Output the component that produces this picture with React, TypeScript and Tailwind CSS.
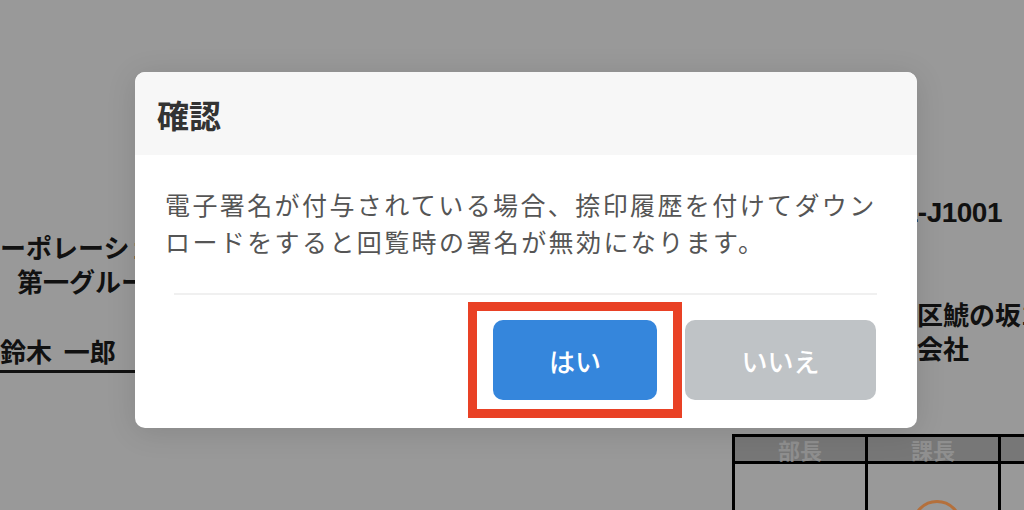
const jp = "font-['Noto_Sans_CJK_JP','Noto_Sans',sans-serif]";

function BackgroundDocument() {
  return (
    <div className={`flex h-full w-full justify-between text-[#111] ${jp}`}>
      <div className="w-[320px] pt-[230px] font-bold">
        <p className="whitespace-nowrap text-[26px] leading-[34px]">ーポレーション</p>
        <p className="whitespace-nowrap pl-[17px] text-[26px] leading-[34px]">第一グループ</p>
        <p className="mt-[36px] w-[300px] whitespace-nowrap border-b-[3px] border-[#111] pb-[2px] text-[26px] leading-[34px]">
          鈴木&nbsp;&nbsp;一郎
        </p>
      </div>
      <div className="w-[292px] pt-[195px]">
        <p className="whitespace-nowrap pr-[22px] text-right font-['Liberation_Sans',sans-serif] text-[28px] font-bold leading-[36px] tracking-[-0.5px]">
          No.2021-J1001
        </p>
        <div className="mt-[66px] pl-[185px] font-bold">
          <p className="whitespace-nowrap text-[26px] leading-[34px]">区鯱の坂1-2-3</p>
          <p className="whitespace-nowrap text-[26px] leading-[34px]">会社</p>
        </div>
        <div className="mt-[69px] flex border-l-[3px] border-t-[3px] border-[#000]">
          {["部長", "課長", "担当"].map((label) => (
            <div key={label} className="w-[133px] shrink-0 border-r-[3px] border-[#000]">
              <div className="flex h-[27px] items-center justify-center border-b-[3px] border-[#000] bg-[#777] text-[22px] font-bold text-[#8f8f8f]">
                {label}
              </div>
              <div className="relative h-[80px] overflow-hidden">
                {label === "課長" && (
                  <span className="absolute left-[44px] top-[36px] h-[50px] w-[50px] rounded-full border-[3px] border-[#b4703c]" />
                )}
              </div>
            </div>
          ))}
        </div>
      </div>
    </div>
  );
}

export default function App() {
  return (
    <div className="relative h-[510px] w-full overflow-hidden bg-[#999999]">
      <BackgroundDocument />

      <div
        className={`absolute left-[135px] top-[72px] w-[782px] overflow-hidden rounded-[10px] bg-white shadow-[0_4px_30px_rgba(0,0,0,0.12)] ${jp}`}
      >
        <div className="flex h-[83px] items-center bg-[#f7f7f7] pl-[22px]">
          <h2 className="text-[32px] font-bold leading-none text-[#333]">確認</h2>
        </div>

        <div className="px-[30px] pb-[33px] pt-[31px] text-[25px] leading-[37px] tracking-[2.4px] text-[#555]">
          電子署名が付与されている場合、捺印履歴を付けてダウン
          <br />
          ロードをすると回覧時の署名が無効になります。
        </div>

        <div className="ml-[39px] mr-[40px] h-[2px] bg-[#f0f0f0]" />

        <div className="flex justify-end gap-[28px] pb-[28px] pr-[41px] pt-[25px]">
          <div className="relative">
            <button className="h-[80px] w-[164px] rounded-[10px] bg-[#3586dc] text-[26px] font-medium text-white">
              はい
            </button>
            <span className="pointer-events-none absolute -bottom-[18px] -left-[25px] -right-[25px] -top-[18px] border-[9px] border-[#e94125]" />
          </div>
          <button className="h-[80px] w-[191px] rounded-[10px] bg-[#bfc3c6] text-[26px] font-medium text-white">
            いいえ
          </button>
        </div>
      </div>
    </div>
  );
}
